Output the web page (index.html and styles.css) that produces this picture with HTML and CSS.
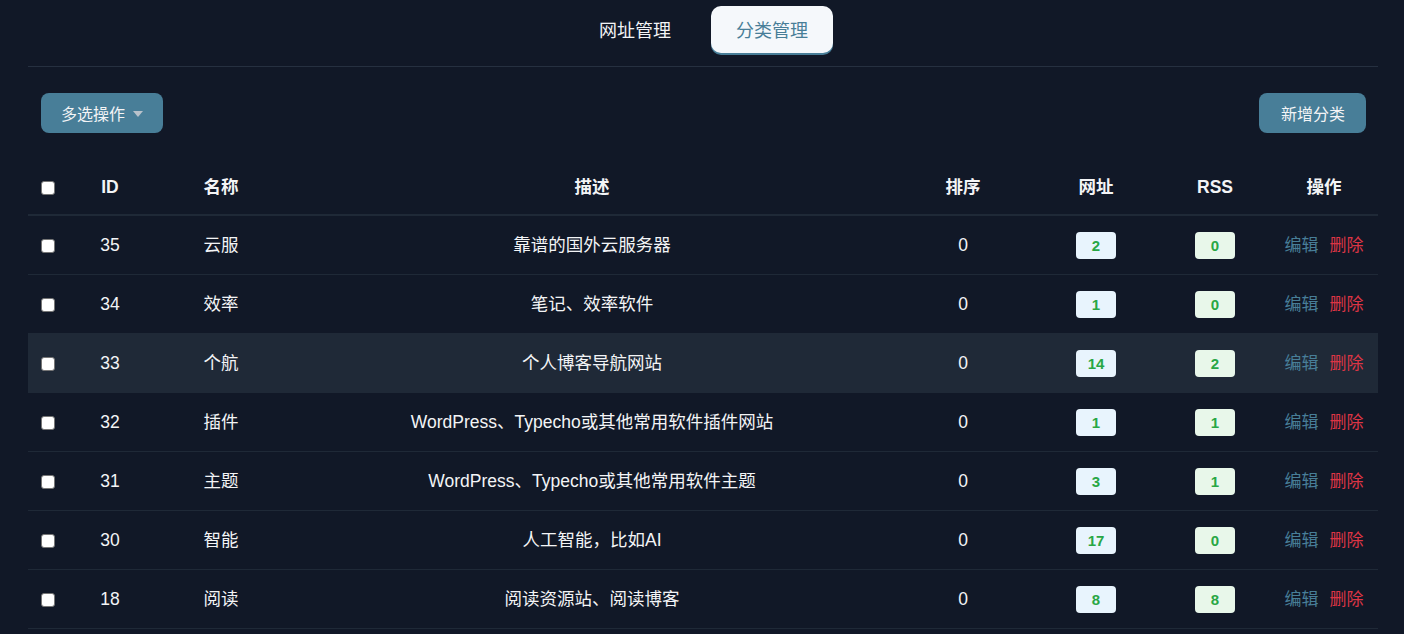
FILE: index.html
```html
<!DOCTYPE html>
<html lang="zh-CN">
  <head>
    <meta charset="UTF-8" />
    <meta name="viewport" content="width=device-width, initial-scale=1.0" />
    <title>分类管理</title>
    <link rel="stylesheet" href="styles.css">
  </head>
  <body>
    <div class="container">
      <div class="tabs">
        <div class="tab">网址管理</div>
        <div class="tab active">分类管理</div>
      </div>

      <div class="toolbar">
        <button class="btn">多选操作 <span class="caret"></span></button>
        <button class="btn">新增分类</button>
      </div>

      <table class="cat-table">
        <thead>
          <tr>
            <th class="col-check"><input type="checkbox" /></th>
            <th class="col-id">ID</th>
            <th class="col-name">名称</th>
            <th class="col-desc">描述</th>
            <th class="col-sort">排序</th>
            <th class="col-url">网址</th>
            <th class="col-rss">RSS</th>
            <th class="col-op">操作</th>
          </tr>
        </thead>
        <tbody>
          <tr>
            <td class="col-check"><input type="checkbox" /></td>
            <td>35</td><td>云服</td><td>靠谱的国外云服务器</td><td>0</td>
            <td><span class="badge url">2</span></td>
            <td><span class="badge rss">0</span></td>
            <td><a class="edit">编辑</a><a class="del">删除</a></td>
          </tr>
          <tr>
            <td class="col-check"><input type="checkbox" /></td>
            <td>34</td><td>效率</td><td>笔记、效率软件</td><td>0</td>
            <td><span class="badge url">1</span></td>
            <td><span class="badge rss">0</span></td>
            <td><a class="edit">编辑</a><a class="del">删除</a></td>
          </tr>
          <tr class="hover">
            <td class="col-check"><input type="checkbox" /></td>
            <td>33</td><td>个航</td><td>个人博客导航网站</td><td>0</td>
            <td><span class="badge url">14</span></td>
            <td><span class="badge rss">2</span></td>
            <td><a class="edit">编辑</a><a class="del">删除</a></td>
          </tr>
          <tr>
            <td class="col-check"><input type="checkbox" /></td>
            <td>32</td><td>插件</td><td>WordPress、Typecho或其他常用软件插件网站</td><td>0</td>
            <td><span class="badge url">1</span></td>
            <td><span class="badge rss">1</span></td>
            <td><a class="edit">编辑</a><a class="del">删除</a></td>
          </tr>
          <tr>
            <td class="col-check"><input type="checkbox" /></td>
            <td>31</td><td>主题</td><td>WordPress、Typecho或其他常用软件主题</td><td>0</td>
            <td><span class="badge url">3</span></td>
            <td><span class="badge rss">1</span></td>
            <td><a class="edit">编辑</a><a class="del">删除</a></td>
          </tr>
          <tr>
            <td class="col-check"><input type="checkbox" /></td>
            <td>30</td><td>智能</td><td>人工智能，比如AI</td><td>0</td>
            <td><span class="badge url">17</span></td>
            <td><span class="badge rss">0</span></td>
            <td><a class="edit">编辑</a><a class="del">删除</a></td>
          </tr>
          <tr>
            <td class="col-check"><input type="checkbox" /></td>
            <td>18</td><td>阅读</td><td>阅读资源站、阅读博客</td><td>0</td>
            <td><span class="badge url">8</span></td>
            <td><span class="badge rss">8</span></td>
            <td><a class="edit">编辑</a><a class="del">删除</a></td>
          </tr>
        </tbody>
      </table>
    </div>
  </body>
</html>
```

FILE: styles.css
```css
body {
  font-family: "Liberation Sans", Arial, "Noto Sans CJK SC", sans-serif;
  margin: 0;
  padding: 0;
  background-color: #111827;
  color: #f3f4f6;
}

.container {
  width: 1350px;
  margin-left: 28px;
}

.tabs {
  display: flex;
  justify-content: center;
  gap: 14px;
  padding: 6px 0 13px;
  border-bottom: 1px solid #263040;
}

.tab {
  padding: 2px 26px 0;
  height: 45px;
  line-height: 47px;
  font-size: 18px;
  color: #f3f4f6;
  border-radius: 10px;
}

.tab.active {
  padding: 2px 25px 0;
  background-color: #f5f8fb;
  color: #487e98;
  box-shadow: 0 2px 0 #487e98;
}

.toolbar {
  display: flex;
  justify-content: space-between;
  padding: 26px 12px 0 13px;
}

.btn {
  background-color: #487e98;
  color: #f3f4f6;
  border: none;
  height: 40px;
  padding: 0 20px;
  border-radius: 8px;
  font-family: inherit;
  font-size: 16px;
  cursor: pointer;
}

.btn:last-child {
  padding: 0 21px 0 22px;
}

.caret {
  display: inline-block;
  width: 0;
  height: 0;
  margin-left: 4px;
  vertical-align: 3px;
  border-left: 5px solid transparent;
  border-right: 5px solid transparent;
  border-top: 6px solid #b9c2cb;
}

.cat-table {
  width: 100%;
  margin-top: 27px;
  border-collapse: collapse;
  table-layout: fixed;
  font-size: 17.5px;
  line-height: 22px;
}

.cat-table th {
  height: 54px;
  padding: 0;
  font-weight: bold;
  text-align: center;
  border-bottom: 2px solid #1f2937;
}

.cat-table td {
  height: 58px;
  padding: 0;
  text-align: center;
  border-bottom: 1px solid #1f2937;
}

.cat-table tr.hover td {
  background-color: #1f2937;
}

.cat-table .col-check {
  text-align: left;
  padding-left: 13px;
}

.cat-table input[type="checkbox"] {
  appearance: none;
  width: 14px;
  height: 14px;
  margin: 0;
  vertical-align: middle;
  background-color: #fff;
  border: 1px solid #767676;
  border-radius: 3px;
}

.col-check { width: 27px; }
.col-id { width: 84px; }
.col-name { width: 138px; }
.col-desc { width: 604px; }
.col-sort { width: 138px; }
.col-url { width: 128px; }
.col-rss { width: 110px; }

.badge {
  display: inline-block;
  width: 40px;
  height: 27px;
  line-height: 27px;
  border-radius: 4px;
  font-size: 15px;
  font-weight: bold;
  color: #28a745;
  vertical-align: middle;
}

.badge.url {
  background-color: #e8f4fd;
}

.badge.rss {
  background-color: #e8f7ea;
}

.edit,
.del {
  cursor: pointer;
  font-size: 17px;
}

.edit {
  color: #487e98;
  margin-right: 11px;
}

.del {
  color: #dc3545;
}
```
